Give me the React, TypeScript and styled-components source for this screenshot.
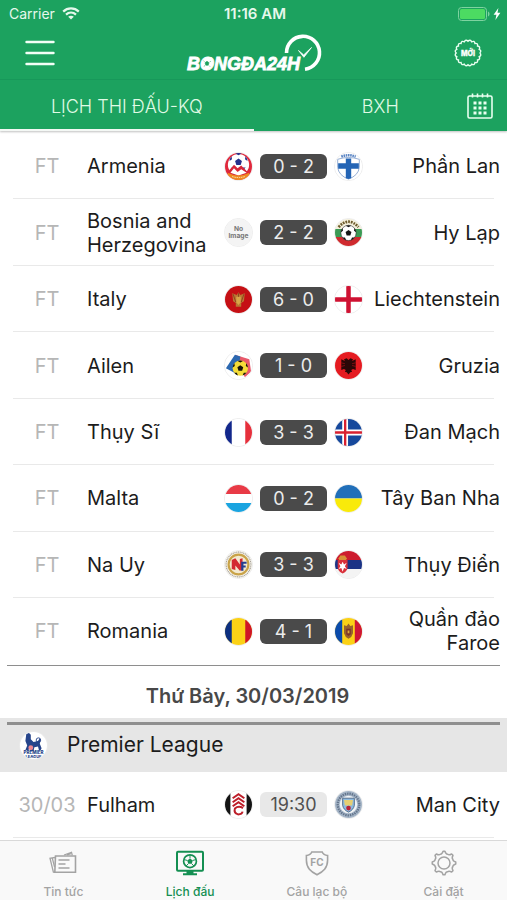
import React, { useState } from 'react';
import styled, { createGlobalStyle } from 'styled-components';

const GREEN = '#1ca25f';
const FONT = 'Inter, "Noto Sans", sans-serif';

const GlobalStyle = createGlobalStyle`
  *, *::before, *::after { box-sizing: border-box; }
  body { margin: 0; background: #fff; font-family: ${FONT}; color: #1c1c1c; }
  button { font: inherit; color: inherit; background: none; border: 0; padding: 0; cursor: pointer; }
  svg { display: block; }
`;

const Page = styled.div`
  min-height: 100vh;
  display: flex;
  flex-direction: column;
`;

const Header = styled.header`
  background: ${GREEN};
  color: #fff;
  box-shadow: 0 1px 2px rgba(0, 0, 0, 0.25);
  position: relative;
`;

const StatusBar = styled.div`
  height: 27px;
  padding: 0 6px 0 9px;
  display: grid;
  grid-template-columns: 1fr auto 1fr;
  align-items: center;
  font-size: 14px;
  line-height: 27px;
  color: #e6f8ec;
`;

const Carrier = styled.div`
  display: flex;
  align-items: center;
  gap: 7px;
`;

const Clock = styled.time`
  font-size: 15px;
  font-weight: 600;
`;

const Power = styled.div`
  display: flex;
  align-items: center;
  justify-content: flex-end;
  gap: 3px;
`;

const NavBar = styled.div`
  height: 53px;
  padding: 0 25px;
  display: grid;
  grid-template-columns: 1fr auto 1fr;
  align-items: center;
  border-bottom: 1px solid #17985a;
`;

const IconButton = styled.button<{ $end?: boolean }>`
  justify-self: ${(p) => (p.$end ? 'end' : 'start')};
`;

const TabBar = styled.nav`
  position: relative;
  display: grid;
  grid-template-columns: 1fr 1fr;
`;

const Tab = styled.button<{ $active: boolean }>`
  height: 51px;
  padding-top: 4px;
  font-size: 18px;
  line-height: 24px;
  font-weight: 300;
  color: #e0fbe6;
  border-bottom: 2px solid ${(p) => (p.$active ? '#f4f8f5' : GREEN)};
`;

const CalendarButton = styled.button`
  position: absolute;
  right: 14px;
  top: 13px;
`;

const Main = styled.main`
  flex: 1;
  display: flex;
  flex-direction: column;
  padding: 2px 0;
`;

const MatchList = styled.ul<{ $count: number }>`
  list-style: none;
  margin: 0;
  padding: 0;
  flex: ${(p) => p.$count} 1 auto;
  display: flex;
  flex-direction: column;
`;

const MatchRow = styled.li<{ $ruled: boolean }>`
  position: relative;
  flex: 1 0 66px;
  padding: 0 7px;
  display: grid;
  grid-template-columns: 80px 1fr 139px 1fr;
  align-items: center;
  font-size: 20px;
  line-height: 24px;

  &::after {
    content: '';
    position: absolute;
    left: 13px;
    right: 13px;
    bottom: 0;
    height: 1px;
    background: ${(p) => (p.$ruled ? '#e9e9e9' : 'transparent')};
  }
`;

const When = styled.span`
  text-align: center;
  color: #b6b6b6;
`;

const Team = styled.span<{ $away?: boolean }>`
  text-align: ${(p) => (p.$away ? 'right' : 'left')};
`;

const Versus = styled.div`
  display: flex;
  align-items: center;
  gap: 7px;
`;

const Score = styled.button<{ $upcoming: boolean }>`
  flex: 1;
  height: 25px;
  border-radius: 6px;
  line-height: 25px;
  background: ${(p) => (p.$upcoming ? '#e8e8e8' : '#4a4a4a')};
  color: ${(p) => (p.$upcoming ? '#505050' : '#ececec')};
  font-size: 18px;
`;

const Badge = styled.svg`
  width: 29px;
  height: 29px;
  border-radius: 50%;
  border: 1px solid #ececec;
`;

const DayHeading = styled.h2`
  margin: 0 7px;
  border-top: 1px solid #8e8e8e;
  height: 53px;
  padding: 3px 12px 0 0;
  text-align: center;
  font-size: 20px;
  line-height: 54px;
  font-weight: 600;
  color: #484848;
`;

const League = styled.section`
  background: #e6e6e6;
  padding: 4px 7px 0;
`;

const LeagueTitle = styled.h3`
  margin: 0;
  border-top: 3px solid #8f8f8f;
  height: 50px;
  padding: 0 12px 6px;
  display: flex;
  align-items: center;
  gap: 19px;
  font-size: 21px;
  line-height: 24px;
  font-weight: 400;
`;

const BottomBar = styled.nav`
  border-top: 1px solid #d9d9d9;
  background: #f9f9f9;
  display: grid;
  grid-template-columns: repeat(4, 1fr);
  position: sticky;
  bottom: 0;
`;

const BottomItem = styled.button<{ $active: boolean }>`
  height: 59px;
  padding-top: 9px;
  display: flex;
  flex-direction: column;
  align-items: center;
  justify-content: flex-start;
  gap: 8px;
  font-size: 12px;
  line-height: 16px;
  font-weight: 500;
  color: ${(p) => (p.$active ? '#148f52' : '#a3a3a3')};
`;

const WifiIcon = () => (
  <svg width="18" height="13" viewBox="0 0 18 13" fill="none" stroke="currentColor" strokeWidth="2.2" aria-hidden="true">
    <path d="M1.2 4.6c4.4-4.2 11.2-4.2 15.6 0" />
    <path d="M4 7.6c2.900-2.700 7.100-2.700 10 0" />
    <path d="M9 12.6 6.200 9.800c1.600-1.400 4-1.400 5.600 0z" fill="currentColor" stroke="none" />
  </svg>
);

const BatteryIcon = () => (
  <svg width="32" height="14" viewBox="0 0 32 14" aria-hidden="true">
    <rect x=".5" y=".5" width="28" height="13" rx="3" fill="none" stroke="#7ed3a0" />
    <rect x="2" y="2" width="25" height="10" rx="1.5" fill="#4cdb62" />
    <path d="M30 4.5c2 .8 2 4.200 0 5z" fill="#7ed3a0" />
  </svg>
);

const BoltIcon = () => (
  <svg width="8" height="12" viewBox="0 0 8 12" fill="#fff" aria-hidden="true">
    <path d="M5.4 0 .6 6.8h2.8L2.4 12l5-7.2H4.5z" />
  </svg>
);

const MenuIcon = () => (
  <svg width="30" height="26" viewBox="0 0 30 26" stroke="#f2fff6" strokeWidth="2.4" strokeLinecap="round" aria-hidden="true">
    <path d="M1.5 2h27M1.5 13h27M1.5 24h27" />
  </svg>
);

const Logo = () => (
  <svg width="138" height="40" viewBox="0 0 138 40" role="img" aria-label="Bongda24h">
    <text x="2" y="37" fill="#fff" stroke="#fff" strokeWidth=".8" fontFamily='"Liberation Sans", Arial, sans-serif' fontWeight="700" fontStyle="italic" fontSize="18">
      BONGĐA24H
    </text>
    <circle cx="22" cy="30.5" r="5" fill="#fff" />
    <path d="m22 28.2 2 1.6-.8 2.400h-2.400l-.8-2.400zM18.400 27.600l1 1M25 33.600l-1-1M25.800 28.400l-1.200.6M18.800 33.400l1.300-.9" fill={GREEN} stroke={GREEN} strokeWidth=".6" />
    <path d="M101.500 20A16.500 16.500 0 1 1 120 36.200" fill="none" stroke="#fff" strokeWidth="3.600" />
    <path d="m113.500 17.500 5.200 4.400 7.800-7.400-7.600 9.800z" fill="#fff" stroke="#fff" strokeWidth=".8" />
  </svg>
);

const scallop = Array.from({ length: 20 }, (_, i) => {
  const at = (k: number, r: number) => {
    const a = (k / 20) * Math.PI * 2;
    return `${(14 + Math.cos(a) * r).toFixed(2)} ${(14 + Math.sin(a) * r).toFixed(2)}`;
  };
  return `${i === 0 ? `M${at(0, 11.8)}` : ''}Q${at(i + 0.5, 14.2)} ${at(i + 1, 11.8)}`;
}).join('');

const NewIcon = () => (
  <svg width="28" height="28" viewBox="0 0 28 28" aria-hidden="true">
    <path d={scallop} fill="none" stroke="#eafff1" strokeWidth="1.4" />
    <text x="14" y="17" textAnchor="middle" fill="#fff" stroke="#fff" strokeWidth=".3" fontFamily={FONT} fontWeight="800" fontSize="7">
      MỚI
    </text>
  </svg>
);

const CalendarIcon = () => (
  <svg width="26" height="26" viewBox="0 0 26 26" fill="none" stroke="#e8fff0" aria-hidden="true">
    <rect x="1" y="3" width="24" height="22" rx="1.5" strokeWidth="1.6" />
    <path d="M5.5.5v4M10.5.5v4M15.5.5v4M20.5.5v4" strokeWidth="1.6" />
    <path d="M6.500 10h3M11.500 10h3M16.500 10h3M6.500 15h3M11.500 15h3M16.500 15h3M6.500 20h3M11.500 20h3M16.500 20h3" strokeWidth="2.8" />
  </svg>
);

const NewsIcon = () => (
  <svg width="28" height="26" viewBox="0 0 28 26" fill="none" stroke="currentColor" strokeWidth="1.3" aria-hidden="true">
    <path d="M6.500 6h20v16.300H5.800z" strokeWidth="1.6" />
    <path d="M6 7.500 1 8.200l3.400 14 1.600.2M3.300 8.200l2.300 9M15 5l7.500-2.600.8 3M18 5l4-1.300" />
    <path d="M9.500 10h11M9.500 14h7M9.500 18h11" strokeWidth="1.5" />
  </svg>
);

const FixturesIcon = () => (
  <svg width="28" height="26" viewBox="0 0 28 26" fill="none" stroke="currentColor" aria-hidden="true">
    <rect x="1" y="1.8" width="26" height="19" rx="1" strokeWidth="2" />
    <circle cx="14" cy="11.2" r="6.4" strokeWidth="1.7" />
    <path d="m14 8.400 2.800 2-1.100 3.300h-3.400l-1.100-3.300z" fill="currentColor" stroke="none" />
    <path d="M14 5v3.400M20 9.600l-3.200.8M17.900 16l-2.200-2.300M10.100 16l2.200-2.300M8 9.600l3.200.8" strokeWidth="1" />
    <path d="M10.500 21h7v2.300H21v2H7v-2h3.500z" fill="currentColor" stroke="none" />
  </svg>
);

const ClubIcon = () => (
  <svg width="26" height="26" viewBox="0 0 26 26" fill="none" stroke="currentColor" aria-hidden="true">
    <path d="M13 24.800C6.800 21.500 2.400 18 2.400 10.300V5.500c2.500-.2 4.500-1.200 5.400-3.500h10.400c.9 2.300 2.900 3.300 5.400 3.500v4.800c0 7.700-4.400 11.200-10.600 14.500z" strokeWidth="1.6" />
    <text x="13" y="15.600" textAnchor="middle" fill="currentColor" stroke="none" fontFamily={FONT} fontWeight="700" fontSize="10">
      FC
    </text>
  </svg>
);

const gearPath = Array.from({ length: 8 }, (_, i) => {
  const at = (k: number, r: number) => {
    const a = (k / 8) * Math.PI * 2 - Math.PI / 2;
    return `${(13 + Math.cos(a) * r).toFixed(2)} ${(13 + Math.sin(a) * r).toFixed(2)}`;
  };
  return `${i === 0 ? 'M' : 'L'}${at(i - 0.1, 11.8)}L${at(i + 0.1, 11.8)}Q${at(i + 0.28, 8.9)} ${at(i + 0.5, 9.6)}Q${at(i + 0.72, 8.9)} ${at(i + 0.9, 11.8)}`;
}).join('');

const SettingsIcon = () => (
  <svg width="26" height="26" viewBox="0 0 26 26" fill="none" stroke="currentColor" strokeWidth="1.5" strokeLinejoin="round" aria-hidden="true">
    <path d={`${gearPath}Z`} />
    <circle cx="13" cy="13" r="6" />
  </svg>
);

const BallPanels = ({ x, y, r, fill }: { x: number; y: number; r: number; fill: string }) => (
  <g transform={`translate(${x} ${y}) scale(${r / 10})`} fill={fill}>
    <path d="m0-4 3.8 2.8L2.4 3.2h-4.8l-1.4-4.4z" />
    <path d="m-3.5-9.4L0-7.6l3.5-1.8A10 10 0 0 0-3.5-9.4zM10-1 7.2-3l.6-3.4A10 10 0 0 1 10-1zM-10-1l2.8-2-.6-3.4A10 10 0 0 0-10-1zM8 6H4.6L3 9.5A10 10 0 0 0 8 6zM-8 6h3.4L-3 9.5A10 10 0 0 1-8 6z" />
  </g>
);

type Crest =
  | 'armenia' | 'finland' | 'none' | 'bulgaria' | 'montenegro' | 'england' | 'andorra' | 'albania'
  | 'france' | 'iceland' | 'luxembourg' | 'ukraine' | 'norway' | 'serbia' | 'romania' | 'moldova'
  | 'fulham' | 'mancity' | 'premier';

const crests: Record<Crest, React.ReactNode> = {
  armenia: (
    <>
      <path d="M0 0h30v30H0z" fill="#e0283c" />
      <circle cx="15" cy="13" r="11.8" fill="#fff" />
      <BallPanels x={15} y={10} r={10} fill="#26318c" />
      <path d="m3 21 7-8 4 4 4-3 8 8-11 5z" fill="#d7263a" />
      <path d="m6 22 4-5 4 4 4-3 6 4-9 3z" fill="#fff" />
      <path d="M3 22q12 6 24 0v8H3z" fill="#ee8a21" />
      <path d="M8 26.2q7 2.2 14 0" stroke="#fff3d0" strokeDasharray="1.5 1" fill="none" />
    </>
  ),
  finland: (
    <>
      <path d="M0 0h30v30H0z" fill="#fff" />
      <path d="M3 7q12-4 24 0v9q-1 9-12 13Q4 25 3 16z" fill="#fff" stroke="#8ba6cf" />
      <path d="M12 6h6v22l-3 1-3-1zM3.500 11.500h23v6h-23z" fill="#2364b5" />
      <path d="M7 4q8-3 16 0" stroke="#5c86c4" strokeWidth="2.8" strokeDasharray="1.8 .7" fill="none" />
    </>
  ),
  none: (
    <>
      <path d="M0 0h30v30H0z" fill="#f4f4f4" />
      <g fill="#777" fontFamily={FONT} fontWeight="700" fontSize="7.4" textAnchor="middle">
        <text x="15" y="13.500">No</text>
        <text x="15" y="21">Image</text>
      </g>
    </>
  ),
  bulgaria: (
    <>
      <path d="M0 0h30v30H0z" fill="#f3efdb" />
      <path d="M0 11h30v10H0z" fill="#3b9a55" />
      <path d="M0 20h30v10H0z" fill="#cf2a2f" />
      <path d="M4 9q11-12 22 0" fill="none" stroke="#6d5b2c" strokeWidth="3" strokeDasharray="2 1.1" />
      <circle cx="15" cy="15.500" r="8.500" fill="#fff" stroke="#222" strokeWidth=".6" />
      <BallPanels x={15} y={15.5} r={8.5} fill="#151515" />
    </>
  ),
  montenegro: (
    <>
      <path d="M0 0h30v30H0z" fill="#c50f14" />
      <path d="m15 7 2 3 5-2-1 9-3 2v4h-6v-4l-3-2-1-9 5 2z" fill="#b97733" />
      <path d="M12.500 12h5v6L15 21l-2.500-3z" fill="#d9a548" />
      <path d="m9 9 3 9M21 9l-3 9M15 8v4" stroke="#8a3e1d" />
    </>
  ),
  england: (
    <>
      <path d="M0 0h30v30H0z" fill="#fff" />
      <path d="M12.500 0h5v30h-5zM0 12.500h30v5H0z" fill="#cf1232" />
    </>
  ),
  andorra: (
    <>
      <path d="M0 0h30v30H0z" fill="#fff" />
      <path d="M11 3 27 8l2 14-7 6z" fill="#e8596a" />
      <path d="m11 3 6 2-3 20L1 18z" fill="#2c68b0" />
      <circle cx="17" cy="18" r="8.500" fill="#f4dc38" />
      <BallPanels x={17} y={18} r={8.5} fill="#16140a" />
    </>
  ),
  albania: (
    <>
      <path d="M0 0h30v30H0z" fill="#e51b21" />
      <path d="m15 9-2-2-3 1 1 2-4-2v12l3-1 2 1-1 2 2 .5L15 25l2-2.500 2-.5-1-2 2-1 3 1V8l-4 2 1-2-3-1z" fill="#2a0707" />
      <path d="m7 12 4 1M7 16l4-1M23 12l-4 1M23 16l-4-1" stroke="#b71319" strokeWidth=".7" />
    </>
  ),
  france: (
    <>
      <path d="M0 0h30v30H0z" fill="#fff" />
      <path d="M0 0h7.500v30H0z" fill="#12278b" />
      <path d="M22.500 0H30v30h-7.500z" fill="#e6303c" />
    </>
  ),
  iceland: (
    <>
      <path d="M0 0h30v30H0z" fill="#16489c" />
      <path d="M8 0h6.500v30H8zM0 11.800h30v6.500H0z" fill="#fff" />
      <path d="M10 0h2.600v30H10zM0 13.700h30v2.600H0z" fill="#d8202f" />
    </>
  ),
  luxembourg: (
    <>
      <path d="M0 0h30v30H0z" fill="#fff" />
      <path d="M0 0h30v10H0z" fill="#e83a46" />
      <path d="M0 20h30v10H0z" fill="#1aa4e0" />
    </>
  ),
  ukraine: (
    <>
      <path d="M0 0h30v15H0z" fill="#216fb9" />
      <path d="M0 15h30v15H0z" fill="#f9ea0a" />
    </>
  ),
  norway: (
    <>
      <path d="M0 0h30v30H0z" fill="#f5f2ea" />
      <circle cx="15" cy="15" r="13.800" fill="none" stroke="#a19c92" strokeWidth="1.200" strokeDasharray="1.200 .8" />
      <circle cx="15" cy="15" r="11" fill="#f3ead0" stroke="#c9a348" strokeWidth="2.400" />
      <path d="M7.500 20V10l4-2 5 7V9l3-1v13l-3 1-5-6v5z" fill="#d32a32" />
      <path d="M18 12h6v2.200h-3.500v2H23v2h-2.500V22H18z" fill="#243f91" />
    </>
  ),
  serbia: (
    <>
      <path d="M0 0h30v10H0z" fill="#cd1c2e" />
      <path d="M0 10h30v10H0z" fill="#1b3386" />
      <path d="M0 20h30v10H0z" fill="#f4f4f4" />
      <path d="m4 8 2-3h5l2 3-1 3H5z" fill="#d78f36" />
      <path d="M3 10h11v9q-1 4-5.500 6Q4 23 3 19z" fill="#d9303a" />
      <path d="m8.500 12 1.500 3 3-2-2 4 2 3-3-1-1.500 4L7 19l-3 1 2-3-2-4 3 2z" fill="#fff" />
    </>
  ),
  romania: (
    <>
      <path d="M0 0h30v30H0z" fill="#fbd116" />
      <path d="M0 0h7.500v30H0z" fill="#0c2f80" />
      <path d="M22.500 0H30v30h-7.500z" fill="#cf1527" />
    </>
  ),
  moldova: (
    <>
      <path d="M0 0h30v30H0z" fill="#fbd116" />
      <path d="M0 0h8v30H0z" fill="#0b4bab" />
      <path d="M22 0h8v30h-8z" fill="#cf1536" />
      <path d="m15 6 2 3 3-1v9l-2 4-3 2-3-2-2-4V8l3 1z" fill="#98622c" />
      <path d="M12.500 12h5v6L15 20l-2.500-2z" fill="#7d3328" />
      <path d="M14 14h2v3h-2z" fill="#d8a83c" />
    </>
  ),
  fulham: (
    <>
      <path d="M0 0h30v30H0z" fill="#fff" />
      <path d="M0 0h6v30H0zM24 0h6v30h-6z" fill="#141414" />
      <path d="m8.500 8 6.500-4.500L21.500 8M8.500 12.500 15 8l6.500 4.500M8.500 17l6.500-4.500 6.500 4.500M20 19q-5-3-9 .5-1.500 5 3.500 6.500 4.500 0 5-3" fill="none" stroke="#bd1f2a" strokeWidth="2.200" />
    </>
  ),
  mancity: (
    <>
      <path d="M0 0h30v30H0z" fill="#a4b4c6" />
      <circle cx="15" cy="15" r="12" fill="none" stroke="#64758c" strokeWidth="2.500" strokeDasharray="1.600 1" />
      <circle cx="15" cy="15" r="9.800" fill="#f1f4f6" />
      <path d="M8.500 8h13v8q-1 5-6.500 7.500Q9.500 21 8.500 16z" fill="#8dbbe0" stroke="#4c6684" />
      <path d="M10 10h10l-1 6h-8z" fill="#e6cf72" />
      <circle cx="15" cy="19" r="2.600" fill="#bb2236" />
    </>
  ),
  premier: (
    <>
      <path d="M0 0h30v30H0z" fill="#fff" />
      <path d="m7 2 3-1 2 2v5l3 3 5-1 2-3 1 2-1 4 2 5-1 2h-2l-1-4-4 1-1 4h-4l1-3-3 2H6l2-5-2-5z" fill="#27458b" />
      <circle cx="20.500" cy="9" r="2.500" fill="none" stroke="#27458b" />
      <circle cx="12" cy="17.500" r="2.700" fill="#ef8791" />
      <g fill="#27458b" fontFamily={FONT} fontWeight="800" textAnchor="middle">
        <text x="15" y="24.500" fontSize="5">PREMIER</text>
        <text x="15" y="29" fontSize="4.500">LEAGUE</text>
      </g>
    </>
  ),
};

const CrestBadge = ({ name }: { name: Crest }) => (
  <Badge viewBox="0 0 30 30" aria-hidden="true">{crests[name]}</Badge>
);

interface Match {
  when: string;
  home: string;
  away: string;
  result: string;
  homeCrest: Crest;
  awayCrest: Crest;
  upcoming?: boolean;
}

const played: Match[] = [
  { when: 'FT', home: 'Armenia', homeCrest: 'armenia', result: '0 - 2', awayCrest: 'finland', away: 'Phần Lan' },
  { when: 'FT', home: 'Bosnia and Herzegovina', homeCrest: 'none', result: '2 - 2', awayCrest: 'bulgaria', away: 'Hy Lạp' },
  { when: 'FT', home: 'Italy', homeCrest: 'montenegro', result: '6 - 0', awayCrest: 'england', away: 'Liechtenstein' },
  { when: 'FT', home: 'Ailen', homeCrest: 'andorra', result: '1 - 0', awayCrest: 'albania', away: 'Gruzia' },
  { when: 'FT', home: 'Thụy Sĩ', homeCrest: 'france', result: '3 - 3', awayCrest: 'iceland', away: 'Đan Mạch' },
  { when: 'FT', home: 'Malta', homeCrest: 'luxembourg', result: '0 - 2', awayCrest: 'ukraine', away: 'Tây Ban Nha' },
  { when: 'FT', home: 'Na Uy', homeCrest: 'norway', result: '3 - 3', awayCrest: 'serbia', away: 'Thụy Điển' },
  { when: 'FT', home: 'Romania', homeCrest: 'romania', result: '4 - 1', awayCrest: 'moldova', away: 'Quần đảo Faroe' },
];

const upcoming: Match[] = [
  { when: '30/03', home: 'Fulham', homeCrest: 'fulham', result: '19:30', awayCrest: 'mancity', away: 'Man City', upcoming: true },
];

const Matches = ({ items, continues = false }: { items: Match[]; continues?: boolean }) => (
  <MatchList $count={items.length}>
    {items.map((m, i) => (
      <MatchRow key={m.home} $ruled={continues || i < items.length - 1}>
        <When>{m.when}</When>
        <Team>{m.home}</Team>
        <Versus>
          <CrestBadge name={m.homeCrest} />
          <Score $upcoming={!!m.upcoming}>{m.result}</Score>
          <CrestBadge name={m.awayCrest} />
        </Versus>
        <Team $away>{m.away}</Team>
      </MatchRow>
    ))}
  </MatchList>
);

const sections = [
  { label: 'Tin tức', Icon: NewsIcon },
  { label: 'Lịch đấu', Icon: FixturesIcon },
  { label: 'Câu lạc bộ', Icon: ClubIcon },
  { label: 'Cài đặt', Icon: SettingsIcon },
];

export default function App() {
  const [tab, setTab] = useState(0);
  const [section, setSection] = useState(1);

  return (
    <Page>
      <GlobalStyle />
      <Header>
        <StatusBar>
          <Carrier>Carrier <WifiIcon /></Carrier>
          <Clock>11:16 AM</Clock>
          <Power><BatteryIcon /><BoltIcon /></Power>
        </StatusBar>
        <NavBar>
          <IconButton aria-label="Menu"><MenuIcon /></IconButton>
          <Logo />
          <IconButton $end aria-label="Mới"><NewIcon /></IconButton>
        </NavBar>
        <TabBar>
          {['LỊCH THI ĐẤU-KQ', 'BXH'].map((label, i) => (
            <Tab key={label} $active={tab === i} onClick={() => setTab(i)}>{label}</Tab>
          ))}
          <CalendarButton aria-label="Chọn ngày"><CalendarIcon /></CalendarButton>
        </TabBar>
      </Header>
      <Main>
        <Matches items={played} />
        <DayHeading>Thứ Bảy, 30/03/2019</DayHeading>
        <League>
          <LeagueTitle><CrestBadge name="premier" />Premier League</LeagueTitle>
        </League>
        <Matches items={upcoming} continues />
      </Main>
      <BottomBar>
        {sections.map(({ label, Icon }, i) => (
          <BottomItem key={label} $active={section === i} onClick={() => setSection(i)}>
            <Icon />
            {label}
          </BottomItem>
        ))}
      </BottomBar>
    </Page>
  );
}
